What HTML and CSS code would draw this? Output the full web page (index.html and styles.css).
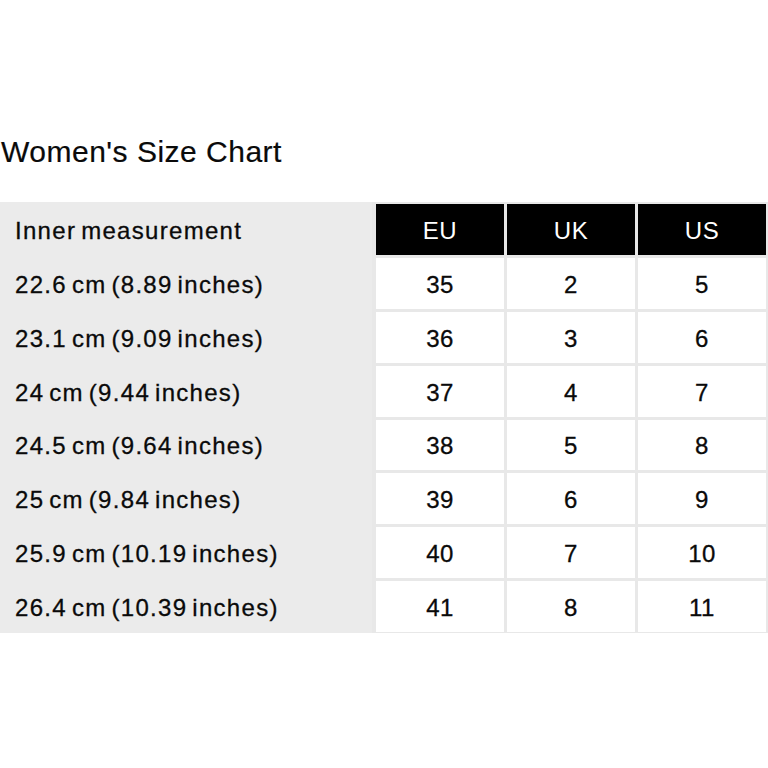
FILE: index.html
```html
<!DOCTYPE html>
<html lang="en">
<head>
<meta charset="utf-8">
<title>Women's Size Chart</title>
<link rel="stylesheet" href="styles.css">
</head>
<body>
<h1 class="title">Women's Size Chart</h1>
<div class="chart">
  <div class="labels">
    <div class="label">Inner measurement</div>
    <div class="label">22.6 cm (8.89 inches)</div>
    <div class="label">23.1 cm (9.09 inches)</div>
    <div class="label">24 cm (9.44 inches)</div>
    <div class="label">24.5 cm (9.64 inches)</div>
    <div class="label">25 cm (9.84 inches)</div>
    <div class="label">25.9 cm (10.19 inches)</div>
    <div class="label">26.4 cm (10.39 inches)</div>
  </div>
  <div class="sizes">
    <div class="cell head">EU</div><div class="cell head">UK</div><div class="cell head">US</div>
    <div class="cell">35</div><div class="cell">2</div><div class="cell">5</div>
    <div class="cell">36</div><div class="cell">3</div><div class="cell">6</div>
    <div class="cell">37</div><div class="cell">4</div><div class="cell">7</div>
    <div class="cell">38</div><div class="cell">5</div><div class="cell">8</div>
    <div class="cell">39</div><div class="cell">6</div><div class="cell">9</div>
    <div class="cell">40</div><div class="cell">7</div><div class="cell">10</div>
    <div class="cell">41</div><div class="cell">8</div><div class="cell">11</div>
  </div>
</div>
</body>
</html>
```
FILE: styles.css
```css
html, body {
  margin: 0;
  padding: 0;
  background: #ffffff;
}
body {
  width: 768px;
  height: 768px;
  font-family: "Liberation Sans", Arial, sans-serif;
  color: #111111;
}
.title {
  margin: 0;
  padding: 134px 0 0 1px;
  height: 36px;
  font-size: 30px;
  line-height: 36px;
  font-weight: normal;
  letter-spacing: 0.5px;
  color: #0a0a0a;
  -webkit-text-stroke: 0.2px #0a0a0a;
}
.chart {
  margin-top: 32px;
  display: flex;
  height: 431px;
}
.labels {
  width: 372px;
  background: #ebebeb;
  box-sizing: border-box;
  padding: 2px 0 1px 0;
  display: grid;
  grid-template-rows: repeat(8, 1fr);
  row-gap: 3px;
}
.label {
  display: flex;
  align-items: center;
  padding: 3px 0 0 15px;
  font-size: 24px;
  letter-spacing: 1.3px;
  word-spacing: -3px;
  color: #0a0a0a;
  -webkit-text-stroke: 0.3px #0a0a0a;
}
.sizes {
  flex: 1;
  box-sizing: border-box;
  padding: 2px 2px 1px 4px;
  background: #e8e8e8;
  display: grid;
  grid-template-columns: repeat(3, 1fr);
  grid-template-rows: repeat(8, 1fr);
  gap: 3px;
}
.cell {
  background: #ffffff;
  display: flex;
  align-items: center;
  justify-content: center;
  padding-top: 3px;
  font-size: 24px;
  letter-spacing: 0.5px;
  color: #0a0a0a;
  -webkit-text-stroke: 0.3px #0a0a0a;
}
.cell.head {
  background: #000000;
  color: #ffffff;
  -webkit-text-stroke: 0;
}
```
